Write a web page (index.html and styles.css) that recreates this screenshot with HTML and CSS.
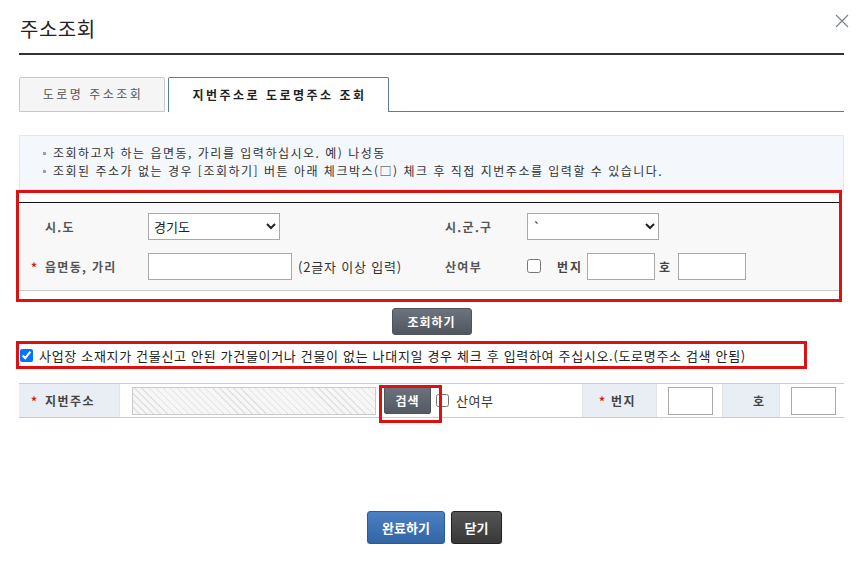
FILE: index.html
```html
<!DOCTYPE html>
<html lang="ko">
<head>
<meta charset="utf-8">
<title>주소조회</title>
<link rel="stylesheet" href="styles.css">
</head>
<body>
<div class="dialog">
  <div class="header">
    <h1 class="title">주소조회</h1>
    <button class="close" type="button" aria-label="닫기">
      <svg width="14" height="14" viewBox="0 0 14 14"><path d="M1 1 L13 13 M13 1 L1 13" stroke="#7a7f88" stroke-width="1.1" fill="none"/></svg>
    </button>
  </div>

  <div class="tabs">
    <div class="tab">도로명 주소조회</div>
    <div class="tab active">지번주소로 도로명주소 조회</div>
    <div class="tab-fill"></div>
  </div>

  <ul class="info">
    <li>조회하고자 하는 읍면동, 가리를 입력하십시오. 예) 나성동</li>
    <li>조회된 주소가 없는 경우 [조회하기] 버튼 아래 체크박스(□) 체크 후 직접 지번주소를 입력할 수 있습니다.</li>
  </ul>

  <div class="search-sec">
    <div class="form-table">
      <div class="form-row">
        <div class="lbl">시.도</div>
        <div class="fld"><select class="sel"><option>경기도</option></select></div>
        <div class="lbl lbl-r">시.군.구</div>
        <div class="fld"><select class="sel"><option>`</option></select></div>
      </div>
      <div class="form-row">
        <div class="lbl req"><span class="star">*</span>읍면동, 가리</div>
        <div class="fld"><input class="txt w144" type="text"><span class="hint">(2글자 이상 입력)</span></div>
        <div class="lbl lbl-r">산여부</div>
        <div class="fld">
          <input class="chk" type="checkbox">
          <span class="blbl bunji">번지</span>
          <input class="txt w68" type="text">
          <span class="blbl ho">호</span>
          <input class="txt w68" type="text">
        </div>
      </div>
    </div>
    <div class="hl hl-form"></div>
  </div>

  <button class="btn-gray" type="button">조회하기</button>

  <div class="manual">
    <input class="chk-m" type="checkbox" checked>
    <span class="manual-text">사업장 소재지가 건물신고 안된 가건물이거나 건물이 없는 나대지일 경우 체크 후 입력하여 주십시오.(도로명주소 검색 안됨)</span>
    <div class="hl hl-manual"></div>
  </div>

  <div class="jibun">
    <div class="jc-lbl w100"><span class="star">*</span>지번주소</div>
    <div class="jc-fld f1">
      <input class="txt hatch" type="text" disabled>
      <button class="btn-search" type="button">검색</button>
      <input class="chk-s" type="checkbox">
      <span class="san">산여부</span>
    </div>
    <div class="jc-lbl w74"><span class="star">*</span>번지</div>
    <div class="jc-fld f2"><input class="txt w45" type="text"></div>
    <div class="jc-lbl w57 ho-lbl">호</div>
    <div class="jc-fld f3"><input class="txt w45" type="text"></div>
    <div class="hl hl-search"></div>
  </div>

  <div class="actions">
    <button class="btn-blue" type="button">완료하기</button>
    <button class="btn-dark" type="button">닫기</button>
  </div>
</div>
</body>
</html>
```

FILE: styles.css
```css
html, body {
  margin: 0;
  padding: 0;
  background: #fff;
}
body {
  font-family: "Noto Sans CJK KR", "Noto Sans", sans-serif;
  font-size: 12px;
  color: #333;
}
.dialog {
  padding: 0 17px 0 19px;
}

/* header */
.header {
  position: relative;
  padding-top: 14px;
  height: 39px;
  border-bottom: 2px solid #333;
}
.title {
  margin: 0;
  padding-left: 1px;
  font-size: 20px;
  line-height: 30px;
  font-weight: normal;
  letter-spacing: 0.5px;
  color: #222;
}
.close {
  position: absolute;
  right: -5px;
  top: 14px;
  width: 14px;
  height: 14px;
  padding: 0;
  border: 0;
  background: none;
}
.close svg { display: block; }

/* tabs */
.tabs {
  display: flex;
  align-items: flex-end;
  margin-top: 22px;
  height: 35px;
}
.tab {
  box-sizing: border-box;
  height: 35px;
  width: 146px;
  border: 1px solid #c9c9c9;
  border-radius: 2px 2px 0 0;
  background: #f5f5f5;
  text-align: center;
  line-height: 32px;
  font-size: 12px;
  letter-spacing: 2.5px;
  text-indent: 2px;
  color: #555;
}
.tab.active {
  width: 221px;
  margin-left: 3px;
  border-color: #5a7b9c;
  border-bottom: 0;
  background: #fff;
  color: #222;
  font-weight: bold;
  line-height: 34px;
}
.tab-fill {
  flex: 1;
  box-sizing: border-box;
  height: 35px;
  border-bottom: 1px solid #5a7b9c;
}

/* info */
.info {
  list-style: none;
  margin: 23px 0 0;
  padding: 8px 10px 9px 33px;
  background: #f4f7fb;
  border: 1px solid #e1e7ee;
}
.info li {
  position: relative;
  line-height: 18px;
  font-size: 12px;
  color: #333;
  letter-spacing: 1.5px;
  white-space: nowrap;
}
.info li::before {
  content: "";
  position: absolute;
  left: -10px;
  top: 8px;
  width: 3px;
  height: 3px;
  background: #a0a0a0;
}

/* search form */
.search-sec {
  position: relative;
  padding-top: 12px;
}
.form-table {
  border-top: 1px solid #111;
  border-bottom: 1px solid #ccc;
  background: #f8f8f8;
  padding: 3px 0 4px;
  margin-right: 4px;
}
.form-row {
  display: grid;
  grid-template-columns: 129px 297px 82px 1fr;
  height: 40px;
  align-items: center;
}
.lbl {
  padding-left: 26px;
  font-weight: bold;
  font-size: 12px;
  letter-spacing: 1.3px;
  color: #555;
}
.lbl.lbl-r { padding-left: 0; }
.lbl.req { padding-left: 12px; }
.star {
  display: inline-block;
  width: 14px;
  color: #d41a1a;
  font-weight: bold;
  letter-spacing: 0;
}
.fld {
  display: flex;
  align-items: center;
}
.sel {
  box-sizing: border-box;
  width: 132px;
  height: 27px;
  border: 1px solid #a9a9a9;
  border-radius: 0;
  background-color: #fff;
  font-family: inherit;
  font-size: 13px;
  color: #222;
  padding: 0 1px;
  margin: 0;
}
.txt {
  box-sizing: border-box;
  height: 27px;
  border: 1px solid #a9a9a9;
  border-radius: 0;
  margin: 0;
  padding: 0 4px;
  background: #fff;
  font-family: inherit;
}
.w144 { width: 144px; }
.w68 { width: 68px; }
.w45 { width: 45px; height: 28px; }
.hint {
  margin-left: 6px;
  font-size: 13px;
  letter-spacing: 0.8px;
  color: #333;
}
.chk {
  width: 14px;
  height: 14px;
  margin: 0;
}
.blbl {
  font-weight: bold;
  font-size: 12px;
  letter-spacing: 2px;
  color: #444;
}
.bunji { margin: 0 4px 0 16px; }
.ho { margin: 0 6px 0 4px; }

/* highlight overlays */
.hl {
  position: absolute;
  border: 3px solid #dc1212;
  pointer-events: none;
}
.hl-form {
  left: -3px;
  top: 0;
  width: 820px;
  height: 106px;
}
.hl-manual {
  left: -3px;
  top: 0;
  width: 785px;
  height: 22px;
}
.hl-search {
  left: 360px;
  top: 1px;
  width: 57px;
  height: 32px;
}

/* buttons */
.btn-gray {
  display: block;
  margin: 17px auto 0;
  width: 80px;
  height: 27px;
  border: 1px solid #4d535b;
  border-radius: 3px;
  background: linear-gradient(#6d747e, #50565f);
  color: #fff;
  font-family: inherit;
  font-weight: bold;
  font-size: 12px;
  letter-spacing: 1px;
  padding: 0;
}

/* manual input checkbox row */
.manual {
  position: relative;
  margin-top: 6px;
  height: 28px;
  display: flex;
  align-items: center;
}
.chk-m {
  width: 13px;
  height: 13px;
  margin: 0 0 0 1px;
}
.manual-text {
  margin-left: 6px;
  font-size: 13px;
  color: #222;
  letter-spacing: 0.68px;
  white-space: nowrap;
}

/* jibun row */
.jibun {
  position: relative;
  display: flex;
  margin-top: 14px;
  height: 33px;
  border-top: 1px solid #ccc;
  border-bottom: 1px solid #ccc;
}
.jc-lbl {
  box-sizing: border-box;
  display: flex;
  align-items: center;
  background: #e9edf4;
  font-weight: bold;
  font-size: 12px;
  letter-spacing: 1.5px;
  color: #444;
}
.w100 { width: 100px; padding-left: 12px; }
.w74 { width: 74px; padding-left: 16px; border-left: 1px solid #e3e3e3; }
.w57 { width: 57px; padding-left: 30px; border-left: 1px solid #e3e3e3; }
.w74 .star { width: 12px; }
.jc-fld {
  box-sizing: border-box;
  display: flex;
  align-items: center;
  border-left: 1px solid #e3e3e3;
}
.f1 { width: 463px; padding-left: 12px; }
.f2 { width: 66px; padding-left: 11px; }
.f3 { flex: 1; padding-left: 11px; }
.hatch {
  width: 244px;
  height: 28px;
  border-color: #c9c9c9;
  background: repeating-linear-gradient(45deg, #f6f6f6 0, #f6f6f6 4px, #e2e2e2 4px, #e2e2e2 5px);
}
.btn-search {
  margin-left: 8px;
  width: 47px;
  height: 27px;
  border: 1px solid #4d535b;
  border-radius: 2px;
  background: linear-gradient(#6a717b, #545a63);
  color: #fff;
  font-family: inherit;
  font-weight: bold;
  font-size: 12px;
  letter-spacing: 1px;
  padding: 0;
}
.chk-s {
  width: 13px;
  height: 13px;
  margin: 0 0 0 5px;
}
.san {
  margin-left: 7px;
  font-size: 13px;
  letter-spacing: 0.5px;
  color: #333;
}

/* actions */
.actions {
  display: flex;
  justify-content: center;
  gap: 6px;
  margin-top: 93px;
  padding-left: 6px;
}
.btn-blue, .btn-dark {
  height: 33px;
  border-radius: 3px;
  color: #fff;
  font-family: inherit;
  font-weight: bold;
  font-size: 13px;
  padding: 0;
  box-shadow: 0 1px 1px rgba(0,0,0,0.25);
}
.btn-blue {
  width: 78px;
  border: 1px solid #2d5b95;
  background: linear-gradient(#4b80c3, #3165a6);
}
.btn-dark {
  width: 51px;
  border: 1px solid #222;
  background: linear-gradient(#555, #383838);
}
```
